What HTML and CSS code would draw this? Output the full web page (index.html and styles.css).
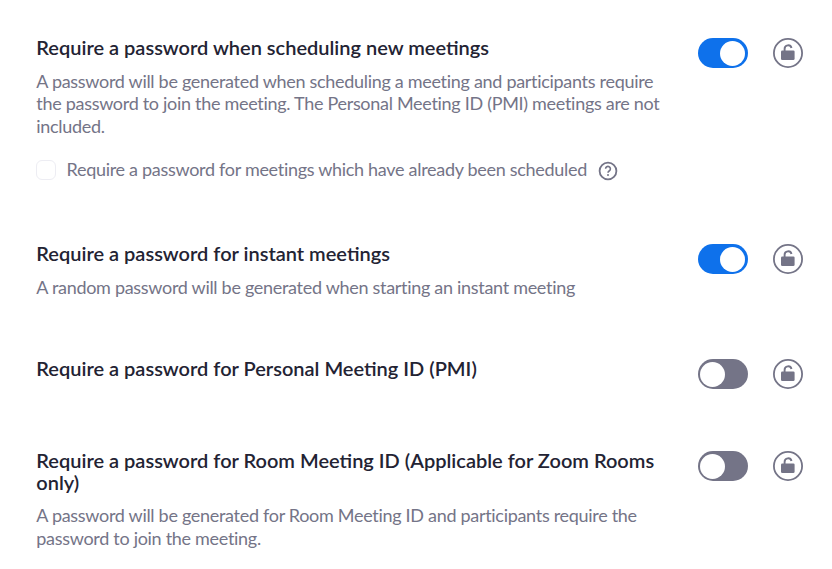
FILE: index.html
```html
<!DOCTYPE html>
<html lang="en">
<head>
<meta charset="utf-8">
<title>Meeting password settings</title>
<link rel="stylesheet" href="styles.css">
</head>
<body>
<svg class="defs" aria-hidden="true"><symbol id="lock" viewBox="0 0 30 30"><circle cx="15" cy="15" r="14.1" fill="none" stroke="currentColor" stroke-width="1.8"/><path d="M11.6 13.5v-2.6a3.5 3.5 0 0 1 6.9-.9" fill="none" stroke="currentColor" stroke-width="1.9"/><rect x="8" y="12.4" width="13.6" height="9.6" rx="1.3" fill="currentColor"/></symbol></svg>
<main class="settings">
<section class="setting setting-new">
<div class="copy"><h2>Require a password when scheduling new meetings</h2>
<p>A password will be generated when scheduling a meeting and participants require<br>the password to join the meeting. The Personal Meeting ID (PMI) meetings are not<br>included.</p>
<label class="option"><span class="box"></span><span class="option-text">Require a password for meetings which have already been scheduled</span>
<svg class="help" viewBox="0 0 20 20"><circle cx="10" cy="10" r="8.4" fill="none" stroke="currentColor" stroke-width="1.8"/><path d="M7.6 7.8a2.4 2.4 0 1 1 3.8 2c-1 .6-1.4 1-1.4 2" fill="none" stroke="currentColor" stroke-width="1.6"/><circle cx="10" cy="14" r="1" fill="currentColor"/></svg></label></div>
<div class="controls"><span class="switch on"></span><svg class="lock"><use href="#lock"/></svg></div>
</section>
<section class="setting setting-instant">
<div class="copy"><h2>Require a password for instant meetings</h2>
<p>A random password will be generated when starting an instant meeting</p></div>
<div class="controls"><span class="switch on"></span><svg class="lock"><use href="#lock"/></svg></div>
</section>
<section class="setting setting-pmi">
<div class="copy"><h2>Require a password for Personal Meeting ID (PMI)</h2></div>
<div class="controls"><span class="switch"></span><svg class="lock"><use href="#lock"/></svg></div>
</section>
<section class="setting">
<div class="copy"><h2>Require a password for Room Meeting ID (Applicable for Zoom Rooms<br>only)</h2>
<p>A password will be generated for Room Meeting ID and participants require the<br>password to join the meeting.</p></div>
<div class="controls"><span class="switch"></span><svg class="lock"><use href="#lock"/></svg></div>
</section>
</main>
</body>
</html>
```
FILE: styles.css
```css
body { margin: 0; background: #fff; font-family: Lato, sans-serif; color: #232333; }
.defs { position: absolute; width: 0; height: 0; }
.settings { padding: 36px 29px 0 36.3px; }
.setting { display: flex; justify-content: space-between; }
.setting-new { height: 206px; }
.setting-instant { height: 115px; }
.setting-pmi { height: 92px; }
.copy { white-space: nowrap; }
h2 { margin: 0; font-size: 20px; line-height: 22px; font-weight: 600; }
p { margin: 12px 0 0; font-size: 18px; line-height: 22.5px; letter-spacing: -0.3px; color: #747487; }
.setting-new p { margin-top: 11.7px; }
.setting:last-child p { margin-top: 11px; }
.option { display: flex; align-items: center; height: 22px; margin-top: 21.8px; font-size: 18px; letter-spacing: -0.3px; color: #747487; }
.option-text { margin-top: -2px; }
.box { box-sizing: border-box; width: 20px; height: 20px; border: 1px solid #ededf3; border-radius: 6px; margin-right: 10.3px; }
.help { width: 20px; height: 20px; margin: 2px 0 0 11.2px; }
.controls { display: flex; gap: 25px; width: 105px; padding-top: 2px; flex: none; color: #747487; }
.switch { box-sizing: border-box; display: flex; align-items: center; width: 50px; height: 30px; padding: 0 2px; border-radius: 15px; background: #747487; }
.switch::before { content: ""; width: 25px; height: 25px; border-radius: 50%; background: #fff; }
.switch.on { background: #0e71eb; justify-content: flex-end; padding-right: 3px; }
.lock { width: 30px; height: 30px; }
```
